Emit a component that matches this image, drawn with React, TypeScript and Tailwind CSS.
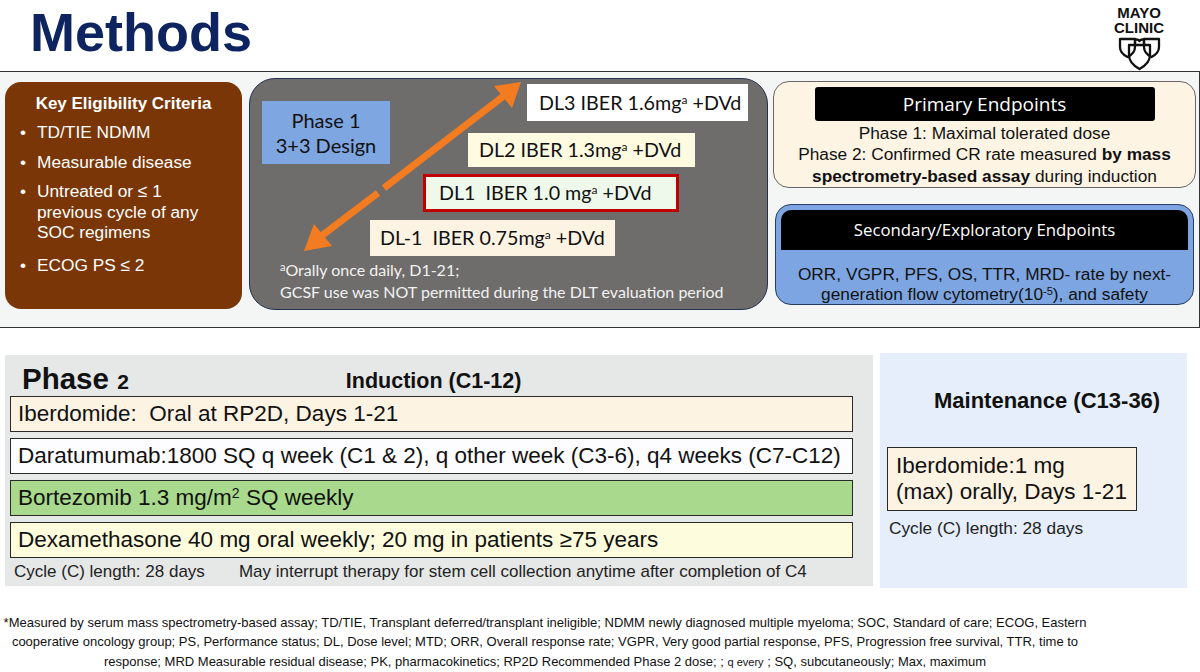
import React from 'react';

const arial = { fontFamily: '"Liberation Sans", Arial, sans-serif' };
const calibri = { fontFamily: 'Lato, "Open Sans", sans-serif' };

function MayoLogo() {
  return (
    <div className="flex flex-col items-center pt-[5px]" style={arial}>
      <div className="text-[15px] font-bold leading-[15px] text-[#111]">MAYO</div>
      <div className="text-[15px] font-bold leading-[15px] text-[#111]">CLINIC</div>
      <svg width="43" height="34" viewBox="0 0 43 34" className="mt-[2px]" fill="none" stroke="#111" strokeWidth="2.3" strokeLinejoin="round">
        <path d="M2 2 H17 V10 C17 15 13.5 18 9.5 20 C5.5 18 2 15 2 10 Z" />
        <path d="M26 2 H41 V10 C41 15 37.5 18 33.5 20 C29.5 18 26 15 26 10 Z" />
        <path d="M11 8 H32 V18 C32 25 27 29 21.5 32 C16 29 11 25 11 18 Z" />
        <path d="M17 8 V4 C17 2 20 2 21.5 4 C23 2 26 2 26 4 V8" />
      </svg>
    </div>
  );
}

function DoseBox({ label, className }: { label: React.ReactNode; className: string }) {
  return (
    <div className={`flex items-center text-[19.7px] text-[#111] ${className}`} style={calibri}>
      {label}
    </div>
  );
}

function Arrow() {
  return (
    <svg className="absolute left-0 top-0" width="519" height="232" viewBox="0 0 519 232" fill="none">
      <g stroke="#f47c20" strokeWidth="7" strokeLinecap="butt">
        <line x1="70" y1="158" x2="128" y2="114" />
        <line x1="134" y1="109" x2="255" y2="16" />
      </g>
      <polygon points="54,172 64,145 82,167" fill="#f47c20" />
      <polygon points="271,3 262,29 244,7" fill="#f47c20" />
    </svg>
  );
}

function Row({ bg, children }: { bg: string; children: React.ReactNode }) {
  return (
    <div className={`ml-[5px] mr-[20px] h-[36px] flex items-center px-[7px] border-[1.5px] border-[#2a2a2a] text-[22.5px] text-[#111] ${bg}`}>
      {children}
    </div>
  );
}

export default function App() {
  return (
    <div className="w-[1200px] h-[672px] bg-white overflow-hidden flex flex-col" style={arial}>
      {/* header */}
      <div className="h-[71px] flex justify-between">
        <h1 className="ml-[30px] mt-[5px] text-[54px] leading-none font-bold text-[#0d2461]">Methods</h1>
        <div className="mr-[36px]">
          <MayoLogo />
        </div>
      </div>

      {/* top panel */}
      <div className="h-[257px] w-[1200px] bg-[#f4f6f5] border-t-[1.5px] border-r-[1.5px] border-b-[1.5px] border-[#333] flex items-start pl-[5px]">
        {/* eligibility */}
        <div className="mt-[10px] w-[237px] h-[227px] rounded-[16px] bg-[#7a3607] text-white pl-[15px] pr-[30px] pt-[12px]">
          <div className="text-[17px] font-bold text-center leading-[20px] -mr-[15px]">Key Eligibility Criteria</div>
          <ul className="mt-[8px] text-[17.3px] leading-[20.5px] space-y-[9px]">
            <li className="flex"><span className="w-[17px] shrink-0">•</span>TD/TIE NDMM</li>
            <li className="flex"><span className="w-[17px] shrink-0">•</span>Measurable disease</li>
            <li className="flex"><span className="w-[17px] shrink-0">•</span><span>Untreated or ≤ 1<br />previous cycle of any<br />SOC regimens</span></li>
            <li className="flex pt-[3px]"><span className="w-[17px] shrink-0">•</span>ECOG PS ≤ 2</li>
          </ul>
        </div>

        {/* phase 1 dose escalation */}
        <div className="relative ml-[7px] mt-[6px] w-[519px] h-[232px] rounded-[26px] bg-[#6f6d6b] border-[1.5px] border-[#24324f] overflow-hidden">
          <Arrow />
          <div className="relative flex flex-col pt-[5px]">
            <div className="flex">
              <div className="ml-[12px] mt-[17px] w-[128px] h-[63px] bg-[#7ea6e0] flex flex-col items-center justify-center text-[20px] leading-[25px] text-[#111]" style={calibri}>
                <span>Phase 1</span>
                <span>3+3 Design</span>
              </div>
              <div className="flex flex-col">
                <DoseBox className="ml-[137px] w-[221px] h-[37px] bg-white pl-[12px]" label={<span>DL3 IBER 1.6mg<sup className="text-[12px]">a</sup> +DVd</span>} />
                <DoseBox className="ml-[78px] mt-[12px] w-[227px] h-[34px] bg-[#fffbe1] pl-[11px]" label={<span>DL2 IBER 1.3mg<sup className="text-[12px]">a</sup> +DVd</span>} />
              </div>
            </div>
            <DoseBox className="ml-[173px] mt-[7px] w-[256px] h-[38px] bg-[#eef9ec] border-[3px] border-[#c00000] pl-[13px]" label={<span>DL1&nbsp; IBER 1.0 mg<sup className="text-[12px]">a</sup> +DVd</span>} />
            <DoseBox className="ml-[120px] mt-[8px] w-[245px] h-[36px] bg-[#fdf3e3] pl-[10px]" label={<span>DL-1&nbsp; IBER 0.75mg<sup className="text-[12px]">a</sup> +DVd</span>} />
            <div className="ml-[30px] mt-[3px] text-[16px] leading-[22px] text-[#f2f2f2]" style={calibri}>
              <div><sup className="text-[11px]">a</sup>Orally once daily, D1-21;</div>
              <div>GCSF use was NOT permitted during the DLT evaluation period</div>
            </div>
          </div>
        </div>

        {/* endpoints */}
        <div className="ml-[5px] w-[423px] flex flex-col">
          <div className="mt-[9px] h-[107px] rounded-[16px] bg-[#fdf4e4] border border-[#666] flex flex-col items-center">
            <div className="mt-[5px] w-[340px] h-[37px] bg-black rounded-[3px] flex items-center justify-center text-white text-[19px]" style={{ fontFamily: '"Open Sans", sans-serif' }}>
              Primary Endpoints
            </div>
            <div className="mt-[2px] text-[17.3px] leading-[21.5px] text-center text-[#111] whitespace-nowrap">
              <div>Phase 1: Maximal tolerated dose</div>
              <div>Phase 2: Confirmed CR rate measured <b>by mass</b></div>
              <div><b>spectrometry-based assay</b> during induction</div>
            </div>
          </div>
          <div className="mt-[16px] mx-[2px] h-[101px] rounded-[16px] bg-[#7ca5e1] border-[1.5px] border-[#2b3c63] flex flex-col items-stretch px-[5px] pt-[5px]">
            <div className="h-[40px] bg-black rounded-t-[10px] flex items-center justify-center text-white text-[16.8px]" style={{ fontFamily: '"Open Sans", sans-serif' }}>
              Secondary/Exploratory Endpoints
            </div>
            <div className="mt-[14px] text-[17.3px] leading-[20px] text-center text-[#111] whitespace-nowrap">
              <div>ORR, VGPR, PFS, OS, TTR, MRD- rate by next-</div>
              <div>generation flow cytometry(10<sup className="text-[11px]">-5</sup>), and safety</div>
            </div>
          </div>
        </div>
      </div>

      {/* phase 2 */}
      <div className="mt-[27px] flex items-start">
        <div className="ml-[5px] w-[868px] h-[231px] bg-[#e6e7e7] flex flex-col">
          <div className="h-[41px] flex items-end pb-[2px]">
            <span className="ml-[17px] text-[29.5px] font-bold leading-none text-[#111]">Phase <span className="text-[21px]">2</span></span>
            <span className="ml-[217px] mb-[1px] text-[21.5px] font-bold leading-none text-[#111]">Induction (C1-12)</span>
          </div>
          <div className="flex flex-col gap-[6px]">
            <Row bg="bg-[#fdf3e3]">Iberdomide:&nbsp; Oral at RP2D, Days 1-21</Row>
            <Row bg="bg-[#fdfcfe]">Daratumumab:1800 SQ q week (C1 &amp; 2), q other week (C3-6), q4 weeks (C7-C12)</Row>
            <Row bg="bg-[#a9d98c]"><span>Bortezomib 1.3 mg/m<sup className="text-[14px]">2</sup> SQ weekly</span></Row>
            <Row bg="bg-[#fdfcdc]">Dexamethasone 40 mg oral weekly; 20 mg in patients ≥75 years</Row>
          </div>
          <div className="ml-[9px] mt-[3px] flex text-[17px] leading-[22px] text-[#222] whitespace-nowrap">
            <span>Cycle (C) length: 28 days</span>
            <span className="ml-[34px]">May interrupt therapy for stem cell collection anytime after completion of C4</span>
          </div>
        </div>
        <div className="ml-[7px] -mt-[2px] w-[307px] h-[235px] bg-[#e5eefa] flex flex-col">
          <div className="mt-[35px] ml-[54px] text-[22px] font-bold leading-[26px] text-[#111] whitespace-nowrap">Maintenance (C13-36)</div>
          <div className="ml-[7px] mt-[33px] w-[250px] h-[64px] bg-[#fdf3e3] border-[1.5px] border-[#2a2a2a] px-[8px] flex flex-col justify-center text-[22.5px] leading-[26px] text-[#111] whitespace-nowrap">
            <div>Iberdomide:1 mg</div>
            <div>(max) orally, Days 1-21</div>
          </div>
          <div className="ml-[9px] mt-[7px] text-[17.3px] leading-[20px] text-[#222]">Cycle (C) length: 28 days</div>
        </div>
      </div>

      {/* footnote */}
      <div className="mt-[25px] w-[1090px] text-center text-[13px] leading-[19.5px] text-[#111] whitespace-nowrap">
        <div>*Measured by serum mass spectrometry-based assay; TD/TIE, Transplant deferred/transplant ineligible; NDMM newly diagnosed multiple myeloma; SOC, Standard of care; ECOG, Eastern</div>
        <div>cooperative oncology group; PS, Performance status; DL, Dose level; MTD; ORR, Overall response rate; VGPR, Very good partial response, PFS, Progression free survival, TTR, time to</div>
        <div>response; MRD Measurable residual disease; PK, pharmacokinetics; RP2D Recommended Phase 2 dose; ; <span className="text-[11px]">q every</span> ; SQ, subcutaneously; Max, maximum</div>
      </div>
    </div>
  );
}
